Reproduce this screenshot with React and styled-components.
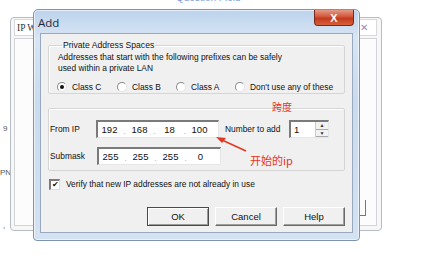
import React from 'react'
import styled, { createGlobalStyle } from 'styled-components'

const Global = createGlobalStyle`
  html, body {
    margin: 0;
    padding: 0;
    background: #fff;
  }
  body {
    font-family: "Liberation Sans", Arial, sans-serif;
  }
`

const Desktop = styled.div`
  position: relative;
  width: 422px;
  height: 255px;
  overflow: hidden;
  background: #fff;
`

const TopLink = styled.div`
  position: absolute;
  left: 176px;
  top: -8px;
  font-size: 10px;
  color: #7fa0d8;
`

const SideText = styled.div`
  position: absolute;
  left: ${p => p.x}px;
  top: ${p => p.y}px;
  font-size: 8px;
  color: #555;
`

const BackWindow = styled.div`
  position: absolute;
  left: 10px;
  top: 17px;
  width: 372px;
  height: 214px;
  box-sizing: border-box;
  border: 1px solid #b6bcc4;
  border-radius: 4px;
  background: #f7f7f7;
  padding: 1px 4px 4px 3px;
  display: flex;
  flex-direction: column;
  gap: 2px;
`

const BackHeader = styled.div`
  height: 15px;
  display: flex;
  align-items: center;
  justify-content: space-between;
  border: 1px solid #d7d9dc;
  background: #fff;
  font-size: 9.5px;
  font-family: "Liberation Serif", serif;
  color: #333;
  padding-left: 2px;
`

const BackClose = styled.span`
  width: 20px;
  height: 15px;
  border-left: 1px solid #d0d0d0;
  color: #9a8ab8;
  font-size: 10px;
  display: flex;
  align-items: center;
  padding-left: 3px;
  box-sizing: border-box;
`

const BackPane = styled.div`
  flex: 1;
  border: 1px solid #d2d4d8;
  background: #fcfcfc;
  display: flex;
  align-items: flex-end;
  justify-content: flex-end;
  padding: 0 10px 9px 0;
`

const BackButtonEdge = styled.div`
  width: 12px;
  height: 15px;
  border-right: 1px solid #777;
  border-bottom: 1px solid #777;
`

const Dialog = styled.div`
  position: absolute;
  left: 33px;
  top: 9px;
  width: 327px;
  height: 232px;
  box-sizing: border-box;
  border: 1px solid #7d93b3;
  border-radius: 5px 5px 4px 4px;
  background: linear-gradient(180deg, #bcd3ec 0%, #d7e5f4 12%, #c9dbee 40%, #d4e2f2 100%);
  box-shadow: 0 0 0 1px rgba(255, 255, 255, 0.6) inset;
  display: flex;
  flex-direction: column;
  padding: 0 6px 7px 6px;
`

const TitleBar = styled.div`
  height: 23px;
  display: flex;
  align-items: flex-start;
  justify-content: space-between;
`

const Title = styled.span`
  font-family: "Open Sans", "Liberation Sans", sans-serif;
  font-size: 11.5px;
  color: #1e2a3a;
  margin: 5px 0 0 -2px;
`

const CloseButton = styled.div`
  width: 40px;
  height: 16px;
  margin-right: -1px;
  border: 1px solid #7a2a1c;
  border-top: none;
  border-radius: 0 0 4px 4px;
  background: linear-gradient(180deg, #e49a86 0%, #d3553a 45%, #c23a1d 55%, #d8603c 100%);
  color: #fff;
  font-size: 11px;
  font-weight: 700;
  display: flex;
  align-items: center;
  justify-content: center;
  box-sizing: border-box;
`

const Client = styled.div`
  position: relative;
  flex: 1;
  background: #f0f0f0;
  border: 1px solid #97a8bf;
  padding: 7px 7px 0 7px;
  display: flex;
  flex-direction: column;
  font-size: 8.4px;
  color: #111;
  white-space: nowrap;
`

const Group = styled.fieldset`
  margin: 0;
  height: ${p => p.h}px;
  box-sizing: border-box;
  border: 1px solid #d5d5d5;
  box-shadow: 1px 1px 0 #fff inset;
  border-radius: 2px;
  padding: ${p => p.pad};
  margin-top: ${p => p.mt || 0}px;
  min-width: 0;
`

const Legend = styled.legend`
  padding: 0 1px;
  margin-left: 6px;
  font-size: 8.6px;
  line-height: 9px;
`

const Line = styled.div`
  line-height: 11px;
  padding-left: 2px;
`

const RadioRow = styled.div`
  display: flex;
  align-items: center;
  margin-top: 8px;
  padding-left: 1px;
`

const RadioItem = styled.label`
  display: flex;
  align-items: center;
  gap: 5px;
  flex: none;
  width: ${p => (p.w ? `${p.w}px` : 'auto')};
`

const RadioCircle = styled.span`
  width: 10px;
  height: 10px;
  flex: none;
  border-radius: 50%;
  box-sizing: border-box;
  background: #fff;
  border: 1px solid;
  border-color: #8a8a8a #e4e4e4 #e4e4e4 #8a8a8a;
  display: flex;
  align-items: center;
  justify-content: center;

  &::after {
    content: '';
    width: 4px;
    height: 4px;
    border-radius: 50%;
    background: ${p => (p.checked ? '#111' : 'transparent')};
  }
`

const FieldRow = styled.div`
  display: flex;
  align-items: center;
  margin-top: ${p => p.mt || 0}px;
`

const Label = styled.span`
  width: ${p => p.w}px;
  margin-left: ${p => p.ml || 0}px;
  flex: none;
`

const Sunken = styled.div`
  height: ${p => p.h || 18}px;
  width: ${p => p.w}px;
  flex: none;
  box-sizing: border-box;
  background: #fff;
  border-top: 2px solid #7a7a7a;
  border-left: 2px solid #7a7a7a;
  border-right: 1px solid #e6e6e6;
  border-bottom: 1px solid #e6e6e6;
  display: flex;
  align-items: center;
  font-size: 9.5px;
`

const Octet = styled.span`
  width: 23px;
  text-align: center;
`

const Dot = styled.span`
  width: 7px;
  text-align: center;
  color: #bbb;
  align-self: flex-end;
  line-height: 12px;
`

const SpinValue = styled.span`
  flex: 1;
  padding-left: 3px;
`

const SpinButtons = styled.div`
  width: 12px;
  height: 100%;
  display: flex;
  flex-direction: column;
  border-left: 1px solid #ccc;
`

const SpinHalf = styled.div`
  flex: 1;
  background: #f2f2f2;
  border-bottom: 1px solid #aaa;
  display: flex;
  align-items: center;
  justify-content: center;
  font-size: 5px;
  color: #333;
`

const CheckRow = styled.label`
  display: flex;
  align-items: center;
  gap: 6px;
  margin-top: 8px;
  padding-left: 1px;
  line-height: 11px;
`

const CheckBox = styled.span`
  width: 11px;
  height: 11px;
  box-sizing: border-box;
  background: #fff;
  border-top: 2px solid #7a7a7a;
  border-left: 2px solid #7a7a7a;
  border-right: 1px solid #ddd;
  border-bottom: 1px solid #ddd;
  font-size: 8px;
  line-height: 8px;
  display: flex;
  justify-content: center;
  color: #111;
`

const Buttons = styled.div`
  display: flex;
  justify-content: flex-end;
  gap: 6px;
  margin-top: 17px;
`

const Button = styled.button`
  width: 62px;
  height: 19px;
  box-sizing: border-box;
  font-family: "Liberation Sans", Arial, sans-serif;
  font-size: 9.5px;
  color: #111;
  background: #f0f0f0;
  padding: 0;
  border: 1px solid;
  border-color: ${p => (p.primary ? '#4a4a4a' : '#fff #6a6a6a #6a6a6a #fff')};
  box-shadow: ${p => (p.primary ? 'inset 1px 1px 0 #fff, inset -1px -1px 0 #9a9a9a' : 'inset -1px -1px 0 #a0a0a0')};
`

const Note = styled.span`
  position: absolute;
  left: ${p => p.x}px;
  top: ${p => p.y}px;
  color: #ea3324;
  font-family: "Noto Sans CJK SC", "Liberation Sans", sans-serif;
  font-size: ${p => p.size}px;
  line-height: 1;
  white-space: nowrap;
`

const ArrowSvg = styled.svg`
  position: absolute;
  left: 0;
  top: 0;
  pointer-events: none;
`

const IpField = ({ parts, w }) => (
  <Sunken w={w}>
    {parts.map((p, i) => (
      <React.Fragment key={i}>
        {i > 0 && <Dot>.</Dot>}
        <Octet>{p}</Octet>
      </React.Fragment>
    ))}
  </Sunken>
)

const App = () => (
  <Desktop>
    <Global />
    <TopLink>Question Field</TopLink>
    <SideText x={3} y={124}>9</SideText>
    <SideText x={0} y={168}>PN</SideText>
    <SideText x={3} y={221}>,</SideText>

    <BackWindow>
      <BackHeader>
        IP W
        <BackClose>✕</BackClose>
      </BackHeader>
      <BackPane>
        <BackButtonEdge />
      </BackPane>
    </BackWindow>

    <Dialog>
      <TitleBar>
        <Title>Add</Title>
        <CloseButton>X</CloseButton>
      </TitleBar>
      <Client>
        <Group h={53} pad="2px 7px 0 7px">
          <Legend>Private Address Spaces</Legend>
          <Line>Addresses that start with the following prefixes can be safely</Line>
          <Line>used within a private LAN</Line>
          <RadioRow>
            <RadioItem w={60}>
              <RadioCircle checked />
              Class C
            </RadioItem>
            <RadioItem w={59}>
              <RadioCircle />
              Class B
            </RadioItem>
            <RadioItem w={59}>
              <RadioCircle />
              Class A
            </RadioItem>
            <RadioItem>
              <RadioCircle />
              Don't use any of these
            </RadioItem>
          </RadioRow>
        </Group>

        <Group h={63} mt={14} pad="11px 0 0 1px">
          <FieldRow>
            <Label w={46}>From IP</Label>
            <IpField w={123} parts={['192', '168', '18', '100']} />
            <Label w={64} ml={6}>Number to add</Label>
            <Sunken w={40}>
              <SpinValue>1</SpinValue>
              <SpinButtons>
                <SpinHalf>▲</SpinHalf>
                <SpinHalf>▼</SpinHalf>
              </SpinButtons>
            </Sunken>
          </FieldRow>
          <FieldRow mt={9}>
            <Label w={47}>Submask</Label>
            <IpField w={124} parts={['255', '255', '255', '0']} />
          </FieldRow>
        </Group>

        <CheckRow>
          <CheckBox>✔</CheckBox>
          Verify that new IP addresses are not already in use
        </CheckRow>

        <Buttons>
          <Button primary>OK</Button>
          <Button>Cancel</Button>
          <Button>Help</Button>
        </Buttons>
      </Client>
    </Dialog>

    <Note x={272} y={102} size={10}>跨度</Note>
    <Note x={250} y={155} size={11}>开始的ip</Note>
    <ArrowSvg width="422" height="255">
      <line x1="246" y1="151" x2="222" y2="140" stroke="#e23a22" strokeWidth="1.6" />
      <polygon points="216,137 226,138 222,143" fill="#e23a22" />
    </ArrowSvg>
  </Desktop>
)

export default App
